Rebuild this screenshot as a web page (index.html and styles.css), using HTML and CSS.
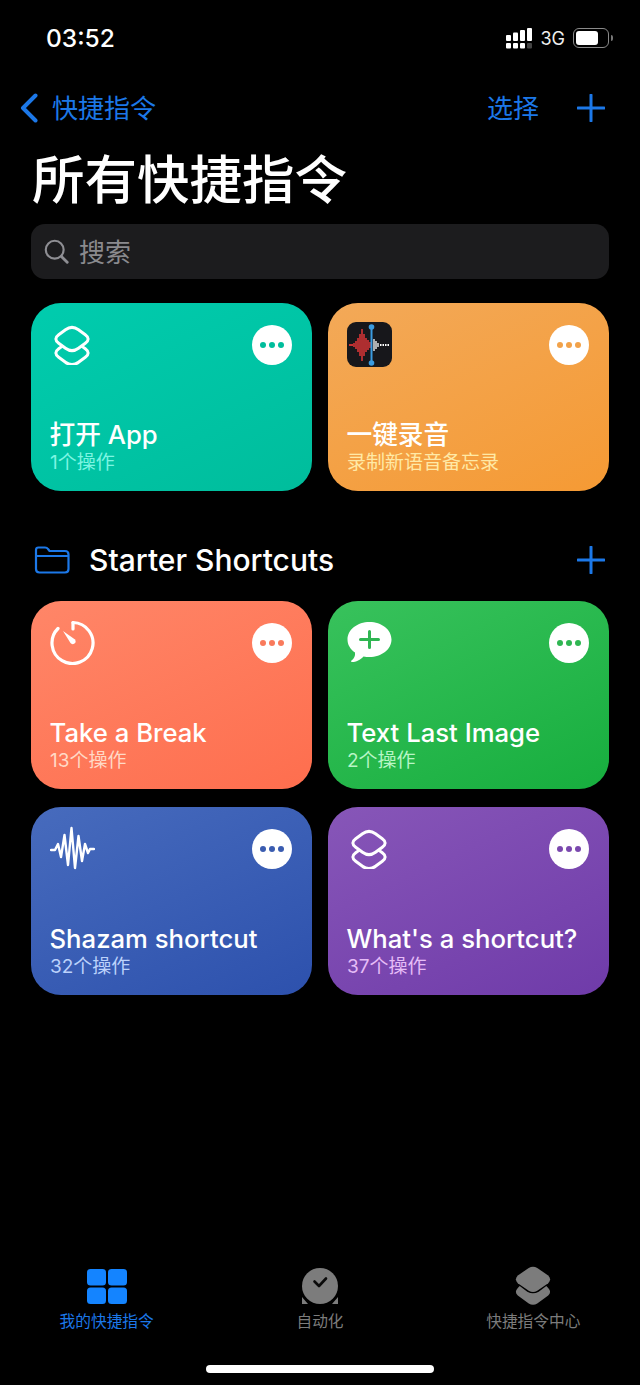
FILE: index.html
```html
<!DOCTYPE html>
<html lang="zh-CN">
<head>
<meta charset="UTF-8" />
<meta name="viewport" content="width=device-width, initial-scale=1" />
<title>所有快捷指令</title>
<link rel="stylesheet" href="styles.css">
</head>
<body>
<svg class="defs" width="0" height="0" aria-hidden="true">
  <symbol id="layers" viewBox="-2 -3 44 44">
    <path d="M13.500 5.800Q20 1 26.500 5.800L33.300 10.800Q39 15 33.300 19.200L26.500 24.200Q20 29 13.500 24.200L6.700 19.200Q1 15 6.700 10.800Z" fill="none" stroke="currentColor" stroke-width="3"/>
    <path d="M10 22.400 6.700 24.800Q1 29 6.700 33.200L13.500 38.200Q20 43 26.500 38.200L33.300 33.200Q39 29 33.300 24.800L30 22.400" fill="none" stroke="currentColor" stroke-width="3" stroke-linecap="round"/>
  </symbol>
  <symbol id="plus" viewBox="0 0 28 28">
    <path d="M14 1V27M1 14H27" stroke="currentColor" stroke-width="3" stroke-linecap="round"/>
  </symbol>
</svg>

<div class="screen">
  <div class="status">
    <span class="time">03:52</span>
    <div class="status-right">
      <svg class="signal" width="27" height="21" viewBox="0 0 27 21" fill="#fff">
        <rect x="0" y="7" width="5" height="6" rx="1"/><rect x="7" y="4.500" width="5" height="8.500" rx="1"/><rect x="14" y="2" width="5" height="11" rx="1"/><rect x="21" y="0" width="5" height="13" rx="1"/>
        <rect x="0" y="15" width="5" height="5.500" rx="1"/><rect x="7" y="15" width="5" height="5.500" rx="1"/><rect x="14" y="15" width="5" height="5.500" rx="1"/><rect x="21" y="15" width="5" height="5.500" rx="1" fill="#444"/>
      </svg>
      <span class="network">3G</span>
      <div class="battery"><div class="battery-fill"></div></div>
      <div class="battery-cap"></div>
    </div>
  </div>

  <div class="nav">
    <div class="nav-back">
      <svg width="20" height="30" viewBox="0 0 20 30"><path d="M16.500 2.500 4 15 16.500 27.500" fill="none" stroke="#1c78e8" stroke-width="4" stroke-linecap="round" stroke-linejoin="round"/></svg>
      <span class="nav-text">快捷指令</span>
    </div>
    <div class="nav-actions">
      <span class="nav-text">选择</span>
      <svg class="plus" width="28" height="28"><use href="#plus"/></svg>
    </div>
  </div>

  <h1 class="title">所有快捷指令</h1>

  <div class="search">
    <svg width="25" height="25" viewBox="0 0 28 28"><circle cx="12" cy="12" r="10" fill="none" stroke="#8e8e93" stroke-width="2.400"/><path d="M19.500 19.500 26 26" stroke="#8e8e93" stroke-width="3.200" stroke-linecap="round"/></svg>
    <span class="nav-text">搜索</span>
  </div>

  <div class="cards">
    <div class="card teal">
      <div class="card-top">
        <svg class="card-icon" width="44" height="44"><use href="#layers"/></svg>
        <div class="more"><i></i><i></i><i></i></div>
      </div>
      <div class="card-name">打开 App</div>
      <div class="card-sub">1个操作</div>
    </div>
    <div class="card orange">
      <div class="card-top">
        <svg class="card-icon" width="45" height="46" viewBox="0 0 45 46">
          <rect width="45" height="45" y="1" rx="9" fill="#17171b"/>
          <path d="M2 24H6M7 22V26M9 20V28M11 17V31M13 13V35M15 8V40M17 13V35M19 17V31M21 19V29M23 21V27" stroke="#ff3b3d" stroke-width="1.300"/>
          <path d="M27 18V30M29 20V28M31 22V26" stroke="#fff" stroke-width="1.300"/>
          <path d="M33 24H43" stroke="#fff" stroke-width="2" stroke-dasharray="1.500 1"/>
          <path d="M24.500 6V42" stroke="#3a9be0" stroke-width="2"/>
          <circle cx="24.500" cy="6" r="2.800" fill="#3a9be0"/><circle cx="24.500" cy="42" r="2.800" fill="#3a9be0"/>
        </svg>
        <div class="more"><i></i><i></i><i></i></div>
      </div>
      <div class="card-name">一键录音</div>
      <div class="card-sub">录制新语音备忘录</div>
    </div>
  </div>

  <div class="folder">
    <svg width="36" height="28" viewBox="0 0 36 28" fill="none" stroke="#1c78e8" stroke-width="2.200"><path d="M2 6V4Q2 1.500 4.500 1.500H11Q13 1.500 14 3L15.500 5H31Q34.500 5 34.500 8.500V23Q34.500 26.500 31 26.500H5.500Q2 26.500 2 23Z"/><path d="M2 10H34.500"/></svg>
    <span class="folder-name">Starter Shortcuts</span>
    <svg class="plus" width="28" height="28"><use href="#plus"/></svg>
  </div>

  <div class="cards cards-folder">
    <div class="card coral">
      <div class="card-top">
        <svg class="card-icon" width="46" height="46" viewBox="0 0 46 46" fill="none" stroke="#fff"><path d="M23 3.500A20.500 20.500 0 1 1 8 9.500" stroke-width="3.200" stroke-linecap="round"/><path d="M23 3.500V10" stroke-width="3.200" stroke-linecap="round"/><path d="M13 12 25 20.500Q26.500 23 24.500 24.500 22 26 20.500 24Z" fill="#fff" stroke="none"/></svg>
        <div class="more"><i></i><i></i><i></i></div>
      </div>
      <div class="card-name">Take a Break</div>
      <div class="card-sub">13个操作</div>
    </div>
    <div class="card green">
      <div class="card-top">
        <svg class="card-icon" width="45" height="46" viewBox="0 -3 45 46"><path d="M22.500 0C34.500 0 44.500 7.500 44.500 17.500 44.500 27.500 34.500 35 22.500 35 20.500 35 18.500 34.800 16.500 34.400 13.500 37.500 9 40 5 40 4 40 3.500 39 4.500 38.500 7 36.500 8.500 34 8 30.500 3 27 .500 22.500 .500 17.500 .500 7.500 10.500 0 22.500 0Z" fill="#fff"/><path d="M22.500 9.500V25.500M13.500 17.500H31.500" stroke="#2fb652" stroke-width="3" stroke-linecap="round"/></svg>
        <div class="more"><i></i><i></i><i></i></div>
      </div>
      <div class="card-name">Text Last Image</div>
      <div class="card-sub">2个操作</div>
    </div>
    <div class="card blue">
      <div class="card-top">
        <svg class="card-icon" width="45" height="46" viewBox="0 -2 45 46" fill="none"><path d="M1 23H5L8 17 11 30 14.500 8 18 38 21.500 1 25 41 28.500 9 32 34 35 17 38 26 40 22H44" stroke="#fff" stroke-width="2.400" stroke-linecap="round" stroke-linejoin="round"/></svg>
        <div class="more"><i></i><i></i><i></i></div>
      </div>
      <div class="card-name">Shazam shortcut</div>
      <div class="card-sub">32个操作</div>
    </div>
    <div class="card purple">
      <div class="card-top">
        <svg class="card-icon" width="44" height="44"><use href="#layers"/></svg>
        <div class="more"><i></i><i></i><i></i></div>
      </div>
      <div class="card-name">What's a shortcut?</div>
      <div class="card-sub">37个操作</div>
    </div>
  </div>

  <div class="tabs">
    <div class="tab tab-active">
      <svg width="40" height="36" viewBox="0 0 40 36" fill="#1484ff"><rect width="19" height="16.500" x="0" y="1" rx="3.500"/><rect width="19" height="16.500" x="21" y="1" rx="3.500"/><rect width="19" height="16.500" x="0" y="19.500" rx="3.500"/><rect width="19" height="16.500" x="21" y="19.500" rx="3.500"/></svg>
      <span>我的快捷指令</span>
    </div>
    <div class="tab">
      <svg width="40" height="36" viewBox="0 0 40 36"><path d="M2 36V29L8 36ZM38 36V29L32 36Z" fill="#7c7c7c"/><circle cx="20" cy="18" r="18" fill="#7c7c7c"/><path d="M14.500 13.500 19 18 26 10.500" fill="none" stroke="#0a0a0a" stroke-width="2.600" stroke-linecap="round" stroke-linejoin="round"/></svg>
      <span>自动化</span>
    </div>
    <div class="tab">
      <svg class="tab-stack" width="38" height="40" viewBox="0 0 40 42" fill="#7c7c7c"><path d="M15.500 2Q20 -.500 24.500 2L36 10Q40 14 36 18L24.500 26Q20 28.500 15.500 26L4 18Q0 14 4 10Z"/><path d="M6 21 14 27Q20 30.500 26 27L34 21 36 23Q40 27 36 31L24.500 39.500Q20 42 15.500 39.500L4 31Q0 27 4 23Z"/></svg>
      <span>快捷指令中心</span>
    </div>
  </div>
  <div class="home-bar"></div>
</div>
</body>
</html>
```

FILE: styles.css
```css
* {
  box-sizing: border-box;
}
body {
  margin: 0;
  background: #000;
  color: #fff;
  font-family: Inter, "Noto Sans CJK SC", sans-serif;
}
.defs {
  position: absolute;
}
.screen {
  width: 640px;
  height: 1385px;
  display: flex;
  flex-direction: column;
  overflow: hidden;
}

/* status bar */
.status {
  height: 76px;
  display: flex;
  align-items: center;
  justify-content: space-between;
  padding: 0 27px 0 46px;
}
.time {
  font-size: 24.500px;
  font-weight: 500;
}
.status-right {
  display: flex;
  align-items: center;
}
.network {
  font-size: 18px;
  margin: 0 8px 0 7px;
  color: #eee;
}
.battery {
  width: 36px;
  height: 20px;
  border: 1.500px solid #8a8a8a;
  border-radius: 6px;
  padding: 2px;
}
.battery-fill {
  width: 22px;
  height: 100%;
  background: #fff;
  border-radius: 3px;
}
.battery-cap {
  width: 2px;
  height: 6px;
  margin-left: 2px;
  background: #777;
  border-radius: 0 2px 2px 0;
}

/* nav */
.nav {
  height: 40px;
  margin-top: 12px;
  display: flex;
  align-items: center;
  justify-content: space-between;
  padding: 0 35px 0 19px;
  color: #1c78e8;
  font-size: 26px;
}
.nav-text {
  margin-bottom: 3px;
}
.nav-back {
  display: flex;
  align-items: center;
  gap: 13px;
}
.nav-actions {
  display: flex;
  align-items: center;
  gap: 38px;
}
.plus {
  color: #1c78e8;
  display: block;
}
.title {
  margin: 22px 0 0;
  padding-left: 32px;
  font-size: 52.500px;
  line-height: 60px;
  font-weight: 500;
}
.search {
  height: 55px;
  margin: 14px 31px 0;
  padding: 0 13px;
  display: flex;
  align-items: center;
  gap: 10px;
  background: #1c1c1e;
  border-radius: 14px;
  color: #8a8a8e;
  font-size: 26px;
}

/* shortcut cards */
.cards {
  display: grid;
  grid-template-columns: 281px 281px;
  column-gap: 16px;
  row-gap: 18px;
  margin: 24px 31px 0;
}
.cards-folder {
  margin-top: 21px;
}
.card {
  height: 188px;
  border-radius: 30px;
  padding: 18px 20px 0 19px;
}
.card-top {
  height: 99px;
  display: flex;
  justify-content: space-between;
  align-items: flex-start;
}
.card-icon {
  display: block;
  color: #fff;
}
.more {
  width: 40px;
  height: 40px;
  margin-top: 4px;
  border-radius: 50%;
  background: #fff;
  display: flex;
  align-items: center;
  justify-content: center;
  gap: 3px;
}
.more i {
  width: 6px;
  height: 6px;
  border-radius: 50%;
  background: currentColor;
}
.card-name {
  color: #fff;
  font-size: 25.700px;
  line-height: 30px;
  font-weight: 500;
  margin-left: -0.500px;
}
.card-sub {
  font-size: 19px;
  line-height: 25px;
}
.teal {
  background: linear-gradient(155deg, #00ccae, #00bd9c);
  color: #00bd9c;
}
.orange {
  background: linear-gradient(155deg, #f3a958, #f59a34);
  color: #f2a24a;
}
.coral {
  background: linear-gradient(155deg, #ff8668, #fe6e4e);
  color: #f97a5c;
}
.green {
  background: linear-gradient(155deg, #38c25c, #17ae3e);
  color: #2fb652;
}
.blue {
  background: linear-gradient(155deg, #476bbd, #2d51ad);
  color: #3a5cb0;
}
.purple {
  background: linear-gradient(155deg, #8756b8, #6f3ba9);
  color: #7a48ae;
}
.teal .card-sub { color: #7df5e2; }
.orange .card-sub { color: #ffe9a6; }
.coral .card-sub { color: #ffd9c6; }
.green .card-sub { color: #b8f5c6; }
.blue .card-sub { color: #bcd2fb; }
.purple .card-sub { color: #e6bcf7; }

/* folder heading */
.folder {
  height: 40px;
  margin-top: 49px;
  padding: 0 35px 0 34px;
  display: flex;
  align-items: center;
}
.folder-name {
  flex: 1;
  margin-left: 19px;
  font-size: 30px;
  font-weight: 500;
}

/* tab bar */
.tabs {
  margin-top: auto;
  display: grid;
  grid-template-columns: repeat(3, 1fr);
  height: 66px;
}
.tab {
  display: flex;
  flex-direction: column;
  align-items: center;
  justify-content: flex-end;
  color: #7c7c7c;
  font-size: 15.700px;
  line-height: 22px;
  gap: 7px;
}
.tab-stack {
  margin-bottom: -2px;
}
.tab-active {
  color: #1c78e8;
}
.home-bar {
  width: 228px;
  height: 8px;
  margin: 33px auto 12px;
  background: #fff;
  border-radius: 4px;
  flex-shrink: 0;
}
```
